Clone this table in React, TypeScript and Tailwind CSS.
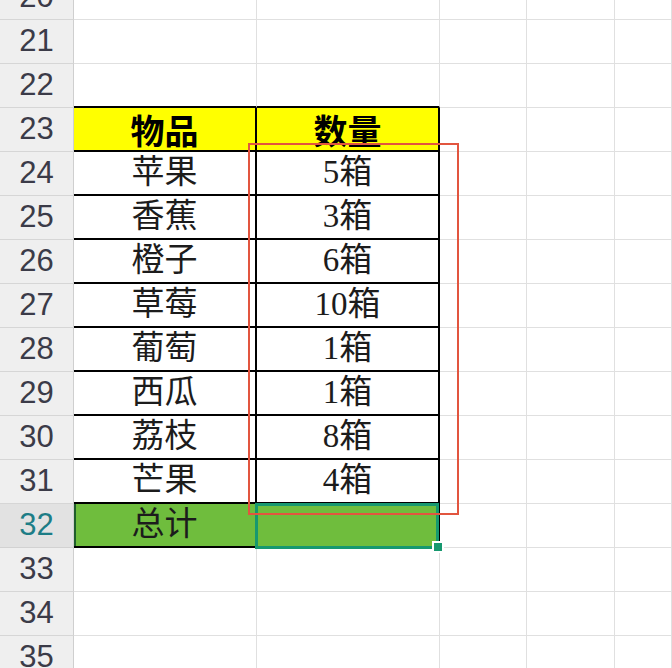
import React from 'react';

type Row = { n: number; a?: string; b?: string };

const rows: Row[] = [
    { n: 20 },
    { n: 21 },
    { n: 22 },
    { n: 23, a: '物品', b: '数量' },
    { n: 24, a: '苹果', b: '5箱' },
    { n: 25, a: '香蕉', b: '3箱' },
    { n: 26, a: '橙子', b: '6箱' },
    { n: 27, a: '草莓', b: '10箱' },
    { n: 28, a: '葡萄', b: '1箱' },
    { n: 29, a: '西瓜', b: '1箱' },
    { n: 30, a: '荔枝', b: '8箱' },
    { n: 31, a: '芒果', b: '4箱' },
    { n: 32, a: '总计' },
    { n: 33 },
    { n: 34 },
    { n: 35 },
];

const cellFont = { fontFamily: '"Liberation Serif", "Noto Sans CJK SC", serif' };

function RowHeader({ n }: { n: number }) {
    const active = n === 32;
    return (
        <div
            className={
                'h-[44px] box-border border-b border-r flex items-center justify-center text-[31px] ' +
                (active
                    ? 'bg-[#e2e2e2] text-[#1d7d86] border-b-[#d2d2d2] border-r-[#cfcfcf]'
                    : 'bg-[#efefef] text-[#3b3b48] border-b-[#d6d6d6] border-r-[#cfcfcf]')
            }
            style={{ fontFamily: '"Liberation Sans", Arial, sans-serif' }}
        >
            {n}
        </div>
    );
}

function Cell({ row, col }: { row: Row; col: 'a' | 'b' }) {
    const n = row.n;
    const text = row[col];
    const inTable = n >= 23 && n <= 32;
    let cls = 'h-[44px] box-border flex items-center justify-center text-[33px] text-[#1c1c1c] ';

    if (n === 22) {
        cls += 'border-b-2 border-b-black border-r border-r-[#e0e0e0] bg-white';
    } else if (n === 23) {
        cls += 'bg-[#ffff00] border-b-2 border-r-2 border-black font-bold text-black !text-[34px]';
    } else if (n === 32) {
        cls += 'bg-[#6fbd3d] border-b-2 border-r-2 border-black';
        if (col === 'a') cls += ' shadow-[inset_2px_0_0_#1f5d2c]';
    } else if (inTable) {
        cls += 'bg-white border-b-2 border-r-2 border-black';
    } else {
        cls += 'bg-white border-b border-r border-[#e0e0e0]';
    }

    return (
        <div
            className={cls + (n === 32 && col === 'b' ? ' relative' : '')}
            style={n === 23 ? { fontFamily: '"Noto Sans CJK SC", sans-serif' } : cellFont}
        >
            {text}
            {n === 32 && col === 'b' && (
                <>
                    <div className="absolute left-[-2px] right-[-1px] top-[-1px] bottom-[-3px] border-[3px] border-[#16986f]" />
                    <div className="absolute right-[-6px] bottom-[-7px] w-[12px] h-[12px] bg-[#16986f] border-2 border-white" />
                </>
            )}
        </div>
    );
}

function Blank() {
    return <div className="h-[44px] box-border border-b border-r border-[#e0e0e0] bg-white" />;
}

export default function App() {
    return (
        <div className="relative w-[672px] h-[668px] overflow-hidden bg-white">
            <div className="-mt-[24px] grid grid-cols-[74px_183px_183px_87px_88px_1fr]">
                {rows.map((r) => (
                    <React.Fragment key={r.n}>
                        <RowHeader n={r.n} />
                        <Cell row={r} col="a" />
                        <Cell row={r} col="b" />
                        <Blank />
                        <Blank />
                        <Blank />
                    </React.Fragment>
                ))}
            </div>
            <div className="absolute left-[248px] top-[143px] w-[211px] h-[372px] border-2 border-[#e2553f] pointer-events-none" />
        </div>
    );
}
